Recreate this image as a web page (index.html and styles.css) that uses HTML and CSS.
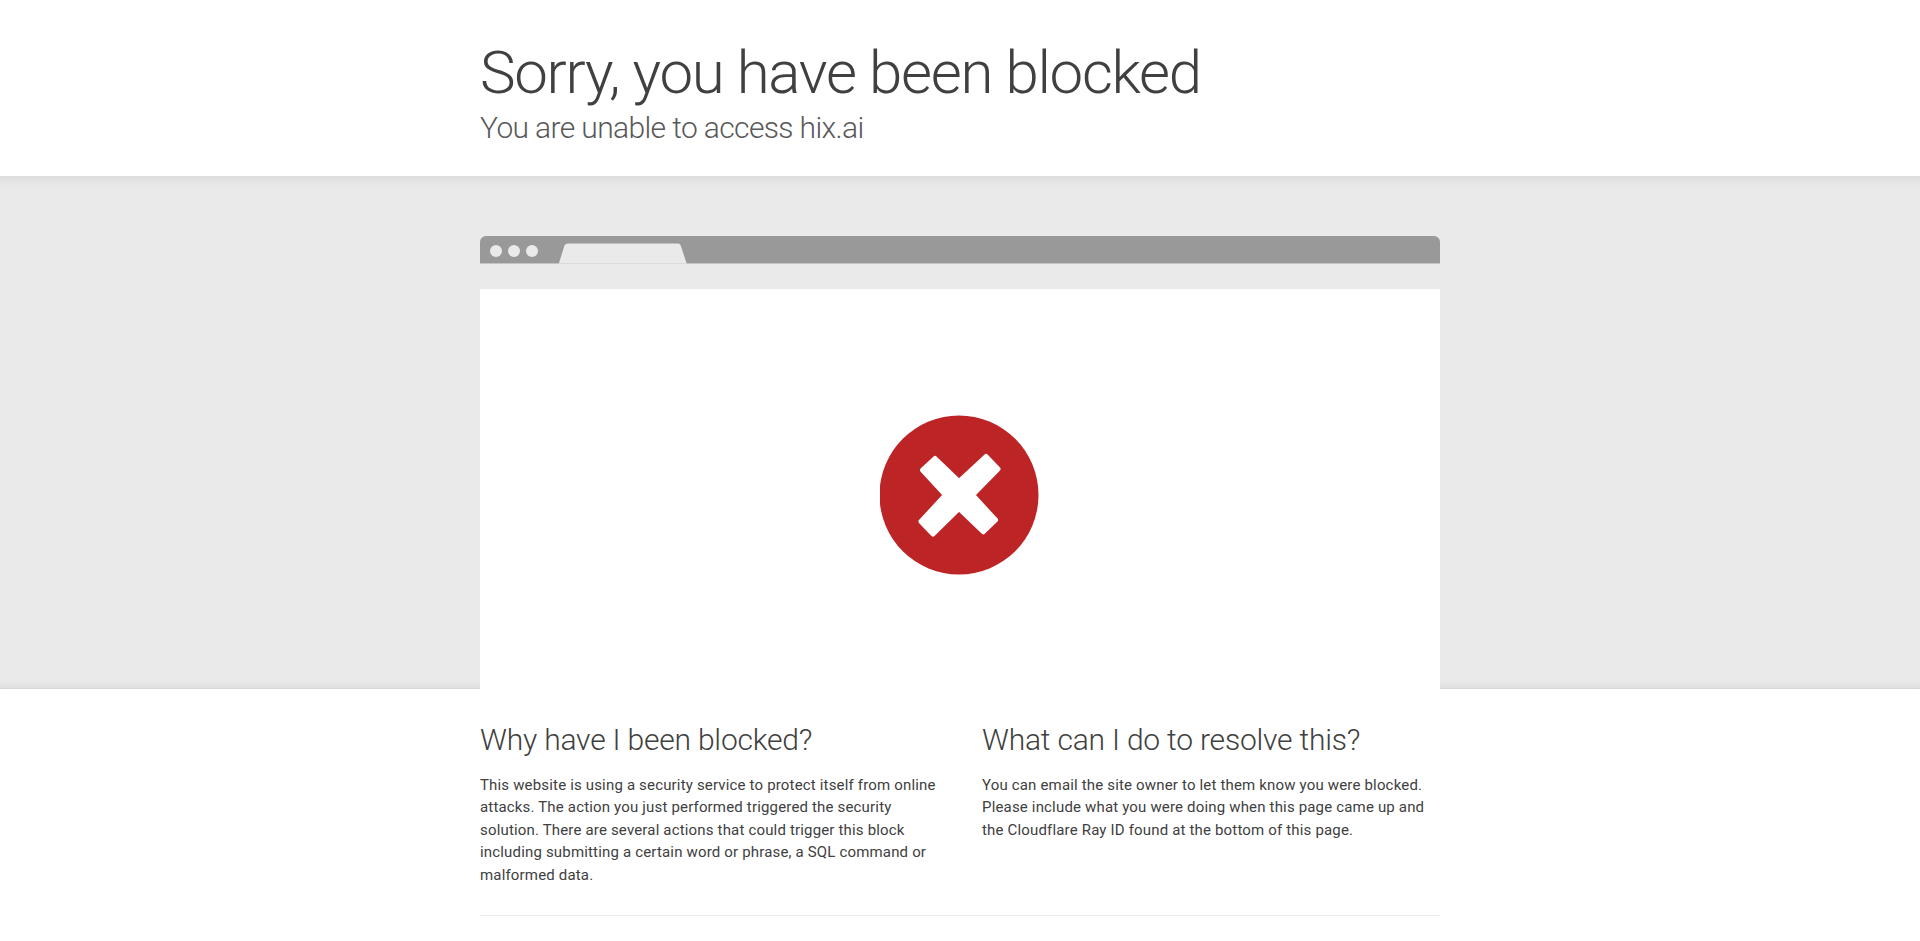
FILE: index.html
```html
<!DOCTYPE html>
<html lang="en">
<head>
<meta charset="UTF-8">
<meta name="viewport" content="width=device-width, initial-scale=1.0">
<title>Attention Required!</title>
<link rel="stylesheet" href="styles.css">
</head>
<body>
<div class="header">
    <div class="wrapper">
        <h1>Sorry, you have been blocked</h1>
        <h2 class="subhead">You are unable to access hix.ai</h2>
    </div>
</div>
<div class="gray-band">
    <div class="wrapper">
        <div class="browser-bar">
            <span class="dot"></span>
            <span class="dot"></span>
            <span class="dot"></span>
            <svg class="tab" width="130" height="21" viewBox="0 0 130 21">
                <path d="M0 20 L5.5 2.5 Q6.2 0.5 9 0.5 L119 0.5 Q121 0.5 121.7 2.5 L127.5 20 Z" fill="#eaeaea"/>
                <rect x="0" y="20" width="127.5" height="1" fill="#dcdcdc"/>
            </svg>
        </div>
        <div class="browser-gap"></div>
        <div class="browser-page">
            <svg class="block-icon" width="160" height="160" viewBox="-79 -80 160 160">
                <circle cx="0" cy="0" r="79.5" fill="#bd2426"/>
                <path d="M0 -13.5 L27 -38.5 L39 -26 L13.5 0 L36.5 25 L24.3 36.8 L0 13.5 L-26 39 L-38 26.5 L-13.5 0 L-36.5 -25 L-24 -36.5 Z" fill="#fff" stroke="#fff" stroke-width="5" stroke-linejoin="round"/>
            </svg>
        </div>
    </div>
</div>
<div class="wrapper">
    <div class="columns">
        <div class="column">
            <h2>Why have I been blocked?</h2>
            <p>This website is using a security service to protect itself from online attacks. The action you just performed triggered the security solution. There are several actions that could trigger this block including submitting a certain word or phrase, a SQL command or malformed data.</p>
        </div>
        <div class="column">
            <h2>What can I do to resolve this?</h2>
            <p>You can email the site owner to let them know you were blocked. Please include what you were doing when this page came up and the Cloudflare Ray ID found at the bottom of this page.</p>
        </div>
    </div>
</div>
</body>
</html>
```

FILE: styles.css
```css
* {
    box-sizing: border-box;
}
body {
    margin: 0;
    background-color: #fff;
    color: #404040;
    font-family: Roboto, "Liberation Sans", sans-serif;
    overflow: hidden;
}
h1, h2, p {
    margin: 0;
    font-weight: 300;
}
.wrapper {
    width: 960px;
    margin: 0 auto;
}
.header {
    height: 176px;
    padding-top: 37px;
}
.header h1 {
    font-size: 60px;
    line-height: 72px;
    letter-spacing: -1.3px;
}
.subhead {
    font-size: 30px;
    line-height: 38px;
    letter-spacing: -0.63px;
    color: #595959;
}
.gray-band {
    height: 513px;
    padding-top: 60px;
    background-color: #eaeaea;
    box-shadow: inset 0 12px 12px -10px #d4d4d4, inset 0 -10px 10px -9px #d4d4d4, inset 0 -1px 0 #d9d9d9;
}
.browser-bar {
    display: flex;
    align-items: center;
    gap: 6px;
    height: 28px;
    padding: 2px 0 1px 10px;
    background-color: #999;
    box-shadow: inset 0 -1px 0 #c4c4c4;
    border-radius: 6px 6px 0 0;
    overflow: hidden;
}
.dot {
    width: 12px;
    height: 12px;
    border-radius: 50%;
    background-color: #eaeaea;
}
.tab {
    align-self: flex-end;
    margin-left: 15px;
    margin-bottom: -1px;
}
.browser-gap {
    height: 25px;
}
.browser-page {
    display: flex;
    justify-content: center;
    height: 400px;
    padding-top: 126px;
    background-color: #fff;
}
.block-icon {
    display: block;
}
.columns {
    display: grid;
    grid-template-columns: 1fr 1fr;
    column-gap: 44px;
    height: 227px;
    padding-top: 31px;
    border-bottom: 1px solid #eaeaea;
}
.column h2 {
    font-size: 30px;
    line-height: 40px;
    font-weight: 300;
    letter-spacing: -0.2px;
    margin-bottom: 13.6px;
}
.column p {
    font-size: 15px;
    line-height: 22.5px;
    font-weight: 400;
    letter-spacing: 0.17px;
}
```
